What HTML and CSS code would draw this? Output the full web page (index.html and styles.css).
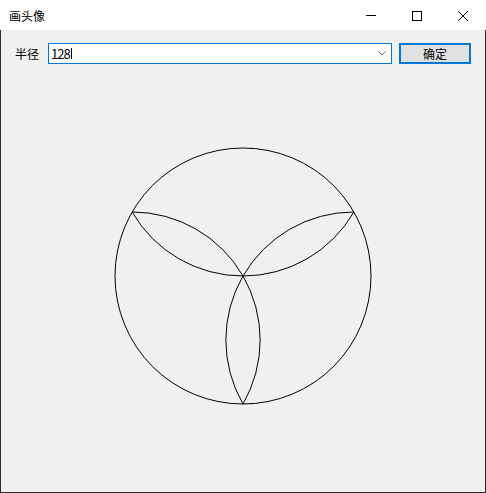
FILE: index.html
```html
<!DOCTYPE html>
<html>
<head>
<meta charset="utf-8">
<link rel="stylesheet" href="styles.css">
</head>
<body>
<div class="window">
  <div class="titlebar">
    <div class="title">画头像</div>
    <div class="capbtn">
      <svg width="10" height="10" viewBox="0 0 10 10"><line x1="0" y1="4.5" x2="10" y2="4.5" stroke="#000" stroke-width="1"/></svg>
    </div>
    <div class="capbtn">
      <svg width="10" height="10" viewBox="0 0 10 10"><rect x="0.5" y="0.5" width="9" height="9" fill="none" stroke="#000" stroke-width="1"/></svg>
    </div>
    <div class="capbtn">
      <svg width="10" height="10" viewBox="0 0 10 10"><path d="M0 0 L10 10 M10 0 L0 10" stroke="#000" stroke-width="1" fill="none"/></svg>
    </div>
  </div>
  <div class="client">
    <div class="toolbar">
      <span class="label">半径</span>
      <div class="combo">
        <span class="value">128</span><span class="caret"></span>
        <svg class="chev" width="8" height="5" viewBox="0 0 8 5"><path d="M0.5 0.5 L4 4 L7.5 0.5" stroke="#606060" stroke-width="1" fill="none"/></svg>
      </div>
      <div class="okbtn">确定</div>
    </div>
    <svg class="canvas" width="484" height="422" viewBox="1 70 484 422">
      <g fill="none" stroke="#000" stroke-width="1">
        <circle cx="243" cy="276" r="128"/>
        <path d="M243 276 A128 128 0 0 0 132.15 212 A128 128 0 0 0 243 276"/>
        <path d="M243 276 A128 128 0 0 0 353.85 212 A128 128 0 0 0 243 276"/>
        <path d="M243 276 A128 128 0 0 0 243 404 A128 128 0 0 0 243 276"/>
      </g>
    </svg>
  </div>
</div>
</body>
</html>
```

FILE: styles.css
```css
html, body {
  margin: 0;
  padding: 0;
  background: #f0f0f0;
}
.window {
  width: 486px;
  height: 493px;
  display: flex;
  flex-direction: column;
  font-family: "Noto Sans CJK SC", "Noto Sans", sans-serif;
  font-size: 12px;
  color: #000;
}
.titlebar {
  height: 30px;
  background: #fff;
  display: flex;
  align-items: stretch;
}
.title {
  flex: 1;
  padding-left: 9px;
  line-height: 30px;
  padding-top: 1px;
  height: 29px;
}
.capbtn {
  width: 46px;
  height: 30px;
  display: flex;
  align-items: center;
  justify-content: center;
}
.capbtn svg {
  display: block;
  margin-top: 1px;
}
.client {
  flex: 1;
  background: #f0f0f0;
  border: 1px solid #2b2b2b;
  border-top: none;
  display: flex;
  flex-direction: column;
}
.toolbar {
  display: flex;
  align-items: center;
  height: 21px;
  margin-top: 13px;
  padding-left: 14px;
}
.label {
  width: 33px;
  line-height: 21px;
}
.combo {
  width: 340px;
  height: 19px;
  border: 1px solid #0078d7;
  background: #fff;
  display: flex;
  align-items: center;
  padding-left: 2px;
  box-sizing: content-box;
}
.value {
  line-height: 19px;
  font-size: 13px;
  letter-spacing: -1px;
}
.caret {
  display: inline-block;
  width: 1px;
  height: 11px;
  background: #000;
  margin-left: 1px;
}
.chev {
  margin-left: auto;
  margin-right: 5px;
  display: block;
}
.okbtn {
  margin-left: 7px;
  width: 68px;
  height: 17px;
  border: 2px solid #0078d7;
  background: #e1e1e1;
  text-align: center;
  line-height: 17px;
}
.canvas {
  display: block;
  margin-top: 6px;
}
```
